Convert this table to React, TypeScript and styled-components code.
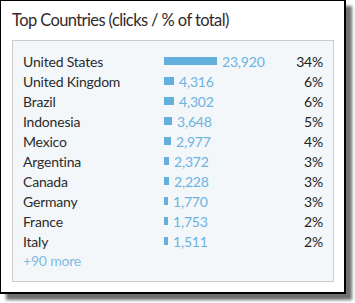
import React from "react";
import styled, { createGlobalStyle } from "styled-components";

const Global = createGlobalStyle`
  html, body { margin: 0; padding: 0; background: #ffffff; }
  body { font-family: Lato, "Open Sans", sans-serif; }
`;

const Page = styled.div`
  width: 355px;
  height: 303px;
  box-sizing: border-box;
`;

const Card = styled.div`
  width: 346px;
  height: 294px;
  box-sizing: border-box;
  background: #ffffff;
  border: solid #000000;
  border-width: 1px 2px 2px 1px;
  box-shadow: 6px 6px 3px #6f6f6f;
  padding: 9px 10px 10px 11px;
  display: flex;
  flex-direction: column;
`;

const Title = styled.h1`
  margin: 0;
  font-family: Lato, sans-serif;
  font-weight: 400;
  font-size: 16.5px;
  letter-spacing: -0.6px;
  line-height: 20px;
  color: #352a2a;
  height: 30px;
`;

const Panel = styled.div`
  flex: 1;
  background: #f3f7fa;
  border: 1px solid #cccccc;
  padding: 10px 10px 0 10px;
  display: flex;
  flex-direction: column;
`;

const Row = styled.div`
  display: grid;
  grid-template-columns: 141px 1fr auto;
  align-items: center;
  height: 20px;
  font-size: 14px;
  letter-spacing: -0.2px;
  color: #2b2b2b;
`;

const Name = styled.span`
  white-space: nowrap;
`;

const BarCell = styled.div`
  display: flex;
  align-items: center;
  gap: 5px;
`;

const Bar = styled.div`
  height: 8px;
  background: #63b0dc;
  flex: none;
`;

const Clicks = styled.span`
  color: #6cb3e0;
`;

const Pct = styled.span`
  text-align: right;
  color: #222222;
`;

const More = styled.div`
  height: 20px;
  line-height: 20px;
  font-size: 14px;
  letter-spacing: -0.2px;
  color: #7fbbe2;
`;

const data: [string, number, number][] = [
  ["United States", 23920, 34],
  ["United Kingdom", 4316, 6],
  ["Brazil", 4302, 6],
  ["Indonesia", 3648, 5],
  ["Mexico", 2977, 4],
  ["Argentina", 2372, 3],
  ["Canada", 2228, 3],
  ["Germany", 1770, 3],
  ["France", 1753, 2],
  ["Italy", 1511, 2],
];

export default function App() {
  const max = data[0][1];
  return (
    <Page>
      <Global />
      <Card>
        <Title>Top Countries (clicks / % of total)</Title>
        <Panel>
          {data.map(([name, v, p]) => (
            <Row key={name}>
              <Name>{name}</Name>
              <BarCell>
                <Bar style={{ width: Math.max(4, Math.round((v / max) * 53)) }} />
                <Clicks>{v.toLocaleString("en-US")}</Clicks>
              </BarCell>
              <Pct>{p}%</Pct>
            </Row>
          ))}
          <More>+90 more</More>
        </Panel>
      </Card>
    </Page>
  );
}
